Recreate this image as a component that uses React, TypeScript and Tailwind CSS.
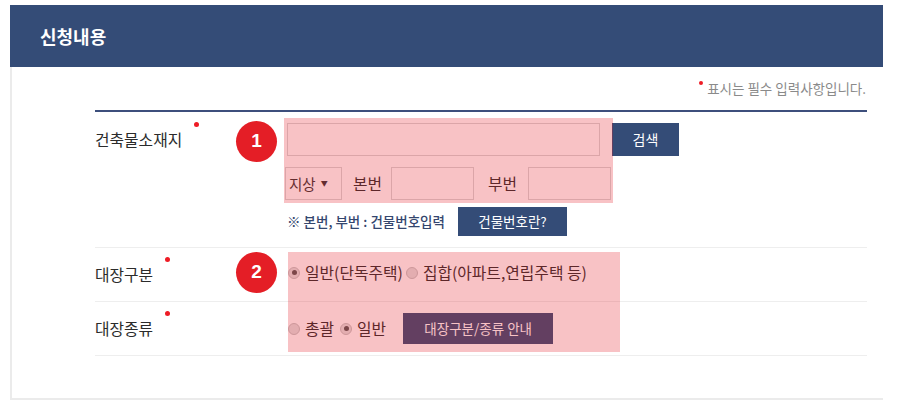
import React from "react";

const FONT = "font-['Noto_Sans_CJK_KR','Noto_Sans',sans-serif]";

/** Small red dot used as the "required" marker */
function RequiredDot() {
  return <span className="ml-[12px] -mt-[8px] inline-block h-[5px] w-[5px] shrink-0 rounded-full bg-[#ee1c25]" />;
}

function Badge({ n, className }: { n: number; className: string }) {
  return (
    <div
      className={`absolute flex h-[41px] w-[41px] items-center justify-center rounded-full bg-[#e41e26] font-['Liberation_Sans',Arial,sans-serif] text-[19px] font-bold text-white ${className}`}
    >
      {n}
    </div>
  );
}

function Radio({ checked, label }: { checked?: boolean; label: string }) {
  return (
    <label className="flex items-center">
      <span className="flex h-[12px] w-[12px] items-center justify-center rounded-full border border-[#c4c4c4] bg-[#e2e2e2]">
        {checked && <span className="h-[5px] w-[5px] rounded-full bg-[#555]" />}
      </span>
      <span className="ml-[5px] text-[15.8px] leading-5 text-[#2b2b2b]">{label}</span>
    </label>
  );
}

export default function App() {
  return (
    <div className={`min-h-[408px] bg-white pl-[10px] pt-[5px] ${FONT}`}>
      <div className="w-[873px]">
        {/* Header */}
        <div className="flex h-[62px] items-center bg-[#344c77] pl-[30px]">
          <h2 className="text-[18px] font-bold text-white">신청내용</h2>
        </div>

        {/* Body */}
        <div className="h-[333px] border-b-2 border-l-2 border-[#ebebeb] pl-[83px] pr-[16px]">
          <div className="flex items-start justify-end pr-px pt-[13px]">
            <span className="mt-[1px] mr-[4px] inline-block h-[4px] w-[4px] rounded-full bg-[#ee1c25]" />
            <span className="text-[13.5px] leading-4 text-[#8a8a8a]">표시는 필수 입력사항입니다.</span>
          </div>
          <div className="mt-[14px] h-[2px] bg-[#3d4f7c]" />

          {/* Row 1: 건축물소재지 */}
          <div className="relative flex border-b border-[#eeeeee] pb-[11px]">
            <div className="flex w-[190px] shrink-0 items-start pt-[18px]">
              <span className="text-[15.8px] leading-5 text-[#2b2b2b]">건축물소재지</span>
              <RequiredDot />
            </div>
            <div className="flex flex-col pt-[11px]">
              <div className="flex items-center pl-[2px]">
                <div className="h-[33px] w-[313px] border border-[#d8d8d8] bg-white" />
                <button className="ml-[12px] h-[33px] w-[67px] bg-[#344c77] text-[14px] text-white">검색</button>
              </div>
              <div className="mt-[11px] flex items-center">
                <div className="flex h-[33px] w-[57px] items-center border border-[#d8d8d8] bg-white pl-[3px] text-[14.5px] text-[#333]">
                  지상
                  <span className="ml-[5px] text-[7px]">▼</span>
                </div>
                <span className="ml-[11px] w-[38px] text-[15.8px] text-[#2b2b2b]">본번</span>
                <div className="h-[33px] w-[83px] border border-[#d8d8d8] bg-white" />
                <span className="ml-[14px] w-[40px] text-[15.8px] text-[#2b2b2b]">부번</span>
                <div className="h-[33px] w-[83px] border border-[#d8d8d8] bg-white" />
              </div>
              <div className="mt-[7px] flex items-center pl-[2px]">
                <span className="w-[171px] text-[13.5px] font-medium text-[#34466e]">※ 본번, 부번 : 건물번호입력</span>
                <button className="h-[29px] w-[109px] bg-[#344c77] text-[13.5px] text-white">건물번호란?</button>
              </div>
            </div>
            <Badge n={1} className="left-[141px] top-[9px]" />
            <div className="pointer-events-none absolute left-[189px] top-[6px] h-[85px] w-[329px] bg-[rgba(230,30,40,0.27)]" />
          </div>

          {/* Rows 2-3: 대장구분 / 대장종류 */}
          <div className="relative">
            <div className="flex h-[54px] items-center border-b border-[#eeeeee]">
              <div className="flex w-[192px] shrink-0 items-start">
                <span className="text-[15.8px] leading-5 text-[#2b2b2b]">대장구분</span>
                <RequiredDot />
              </div>
              <div className="-mt-[4px] flex items-center gap-[3px] pl-px">
                <Radio checked label="일반(단독주택)" />
                <Radio label="집합(아파트,연립주택 등)" />
              </div>
            </div>
            <div className="flex h-[54px] items-center border-b border-[#eeeeee]">
              <div className="flex w-[192px] shrink-0 items-start">
                <span className="text-[15.8px] leading-5 text-[#2b2b2b]">대장종류</span>
                <RequiredDot />
              </div>
              <div className="flex items-center pl-px">
                <Radio label="총괄" />
                <span className="ml-[6px]">
                  <Radio checked label="일반" />
                </span>
                <button className="ml-[17px] h-[31px] w-[150px] bg-[#344c77] text-[13.5px] text-white">
                  대장구분/종류 안내
                </button>
              </div>
            </div>
            <Badge n={2} className="left-[141px] top-[4px]" />
            <div className="pointer-events-none absolute left-[193px] top-[4px] h-[100px] w-[332px] bg-[rgba(230,30,40,0.27)]" />
          </div>
        </div>
      </div>
    </div>
  );
}
